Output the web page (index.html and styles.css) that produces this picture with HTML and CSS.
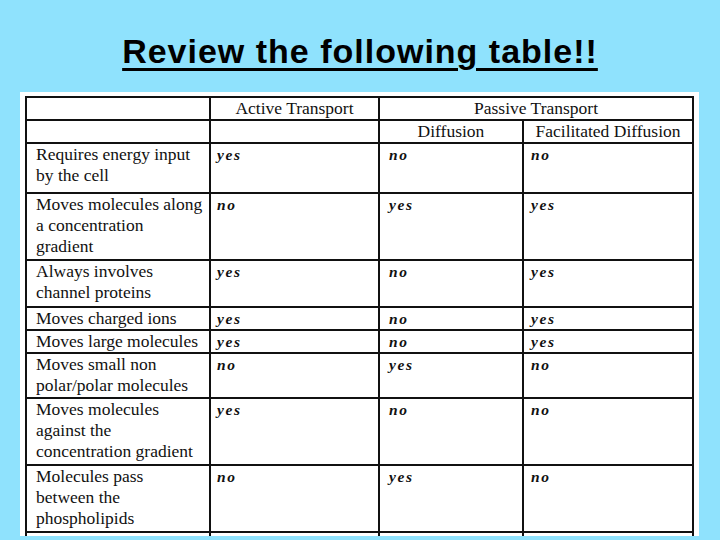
FILE: index.html
```html
<!DOCTYPE html>
<html>
<head>
<meta charset="utf-8">
<link rel="stylesheet" href="styles.css">
</head>
<body>
<header class="title-bar">
  <h1 class="title">Review the following table!!</h1>
</header>
<main class="panel">
  <table class="grid">
    <colgroup>
      <col class="c-label"><col class="c-active"><col class="c-diff"><col class="c-fac">
    </colgroup>
    <tr class="h23">
      <td></td>
      <td class="head">Active Transport</td>
      <td class="head" colspan="2">Passive Transport</td>
    </tr>
    <tr class="h23">
      <td></td>
      <td></td>
      <td class="head">Diffusion</td>
      <td class="head">Facilitated Diffusion</td>
    </tr>
    <tr class="h50">
      <td class="label">Requires energy input<br>by the cell</td>
      <td class="val v-a">yes</td><td class="val v-d">no</td><td class="val v-f">no</td>
    </tr>
    <tr class="h67">
      <td class="label">Moves molecules along<br>a concentration<br>gradient</td>
      <td class="val v-a">no</td><td class="val v-d">yes</td><td class="val v-f">yes</td>
    </tr>
    <tr class="h47">
      <td class="label">Always involves<br>channel proteins</td>
      <td class="val v-a">yes</td><td class="val v-d">no</td><td class="val v-f">yes</td>
    </tr>
    <tr class="h23">
      <td class="label">Moves charged ions</td>
      <td class="val v-a">yes</td><td class="val v-d">no</td><td class="val v-f">yes</td>
    </tr>
    <tr class="h23">
      <td class="label">Moves large molecules</td>
      <td class="val v-a">yes</td><td class="val v-d">no</td><td class="val v-f">yes</td>
    </tr>
    <tr class="h45">
      <td class="label">Moves small non<br>polar/polar molecules</td>
      <td class="val v-a">no</td><td class="val v-d">yes</td><td class="val v-f">no</td>
    </tr>
    <tr class="h67">
      <td class="label">Moves molecules<br>against the<br>concentration gradient</td>
      <td class="val v-a">yes</td><td class="val v-d">no</td><td class="val v-f">no</td>
    </tr>
    <tr class="h67">
      <td class="label">Molecules pass<br>between the<br>phospholipids</td>
      <td class="val v-a">no</td><td class="val v-d">yes</td><td class="val v-f">no</td>
    </tr>
    <tr class="h23">
      <td></td><td></td><td></td><td></td>
    </tr>
  </table>
</main>
</body>
</html>
```
FILE: styles.css
```css
html, body {
  margin: 0;
  padding: 0;
}
body {
  background: #8fe2fd;
  width: 720px;
  height: 540px;
  overflow: hidden;
}
.title-bar {
  height: 92px;
  box-sizing: border-box;
  padding-top: 31px;
  text-align: center;
}
.title {
  margin: 0;
  font-family: "Liberation Sans", Arial, sans-serif;
  font-weight: bold;
  font-size: 34px;
  letter-spacing: 1px;
  line-height: 41px;
  color: #000;
  text-decoration: underline;
  text-decoration-thickness: 3px;
  text-underline-offset: 5px;
}
.panel {
  margin-left: 20px;
  width: 679px;
  height: 444px;
  box-sizing: border-box;
  padding: 4px 0 0 5px;
  background: #fff;
  overflow: hidden;
}
.grid {
  border-collapse: collapse;
  table-layout: fixed;
  width: 667px;
  font-family: "Liberation Serif", "Times New Roman", serif;
  font-size: 17.5px;
  line-height: 21px;
  color: #111;
}
.c-label { width: 184px; }
.c-active { width: 169px; }
.c-diff { width: 144px; }
.c-fac { width: 170px; }
.grid td {
  border: 2px solid #111;
  padding: 0 6px;
  vertical-align: top;
  white-space: nowrap;
  overflow: hidden;
}
.grid td.head {
  text-align: center;
  padding-left: 2px;
  padding-right: 2px;
}
.grid td.label {
  padding-left: 9px;
}
.grid td.val {
  font-style: italic;
  font-weight: bold;
  font-size: 15.5px;
  letter-spacing: 1.6px;
}
.grid td.v-a { padding-left: 6px; }
.grid td.v-d { padding-left: 9px; }
.grid td.v-f { padding-left: 7px; }
.h23 { height: 23px; }
.h45 { height: 45px; }
.h47 { height: 47px; }
.h50 { height: 50px; }
.h67 { height: 67px; }
```
